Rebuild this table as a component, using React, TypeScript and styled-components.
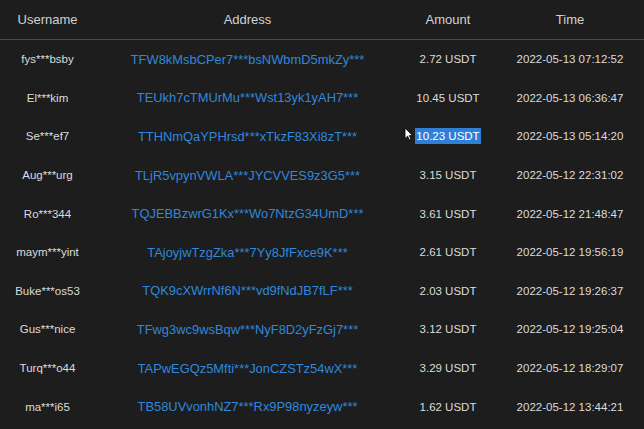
import React from "react";
import styled, { createGlobalStyle } from "styled-components";

const GlobalStyle = createGlobalStyle`
  html, body {
    margin: 0;
    padding: 0;
    background: #1d1d1d;
  }
  body {
    font-family: "Liberation Sans", Arial, sans-serif;
  }
`;

const Page = styled.div`
  position: relative;
  width: 644px;
  height: 429px;
  background: #1d1d1d;
  overflow: hidden;
`;

const Grid = styled.div`
  display: grid;
  grid-template-columns: 95px 305px 96px 1fr;
`;

const HeadCell = styled.div`
  height: 39px;
  border-bottom: 1px solid #4a4a4a;
  display: flex;
  align-items: center;
  justify-content: center;
  color: #d2d2d2;
  font-size: 13px;
`;

const Cell = styled.div<{ $link?: boolean }>`
  height: 38.6px;
  display: flex;
  align-items: center;
  justify-content: center;
  white-space: nowrap;
  font-size: ${(p) => (p.$link ? "12.9px" : "11.5px")};
  color: ${(p) => (p.$link ? "#2f88dc" : "#dcdcdc")};
`;

const Selected = styled.span`
  background: #2f7fd8;
  color: #ffffff;
  padding: 2px 1px;
`;

const Cursor = styled.svg`
  position: absolute;
  left: 404px;
  top: 127px;
`;

type Row = { user: string; addr: string; amount: string; time: string; sel?: boolean };

const rows: Row[] = [
  { user: "fys***bsby", addr: "TFW8kMsbCPer7***bsNWbmD5mkZy***", amount: "2.72 USDT", time: "2022-05-13 07:12:52" },
  { user: "El***kim", addr: "TEUkh7cTMUrMu***Wst13yk1yAH7***", amount: "10.45 USDT", time: "2022-05-13 06:36:47" },
  { user: "Se***ef7", addr: "TTHNmQaYPHrsd***xTkzF83Xi8zT***", amount: "10.23 USDT", time: "2022-05-13 05:14:20", sel: true },
  { user: "Aug***urg", addr: "TLjR5vpynVWLA***JYCVVES9z3G5***", amount: "3.15 USDT", time: "2022-05-12 22:31:02" },
  { user: "Ro***344", addr: "TQJEBBzwrG1Kx***Wo7NtzG34UmD***", amount: "3.61 USDT", time: "2022-05-12 21:48:47" },
  { user: "maym***yint", addr: "TAjoyjwTzgZka***7Yy8JfFxce9K***", amount: "2.61 USDT", time: "2022-05-12 19:56:19" },
  { user: "Buke***os53", addr: "TQK9cXWrrNf6N***vd9fNdJB7fLF***", amount: "2.03 USDT", time: "2022-05-12 19:26:37" },
  { user: "Gus***nice", addr: "TFwg3wc9wsBqw***NyF8D2yFzGj7***", amount: "3.12 USDT", time: "2022-05-12 19:25:04" },
  { user: "Turq***o44", addr: "TAPwEGQz5Mfti***JonCZSTz54wX***", amount: "3.29 USDT", time: "2022-05-12 18:29:07" },
  { user: "ma***i65", addr: "TB58UVvonhNZ7***Rx9P98nyzeyw***", amount: "1.62 USDT", time: "2022-05-12 13:44:21" },
];

export default function App() {
  return (
    <Page>
      <GlobalStyle />
      <Grid>
        <HeadCell>Username</HeadCell>
        <HeadCell>Address</HeadCell>
        <HeadCell>Amount</HeadCell>
        <HeadCell>Time</HeadCell>
        {rows.map((r) => (
          <React.Fragment key={r.user}>
            <Cell>{r.user}</Cell>
            <Cell $link>{r.addr}</Cell>
            <Cell>{r.sel ? <Selected>{r.amount}</Selected> : r.amount}</Cell>
            <Cell>{r.time}</Cell>
          </React.Fragment>
        ))}
      </Grid>
      <Cursor width="9" height="14" viewBox="0 0 9 14">
        <path d="M1 1 L1 11.5 L3.6 9.2 L5.4 13 L7 12.2 L5.3 8.6 L8.5 8.6 Z" fill="#fff" stroke="#000" strokeWidth="0.8" />
      </Cursor>
    </Page>
  );
}
